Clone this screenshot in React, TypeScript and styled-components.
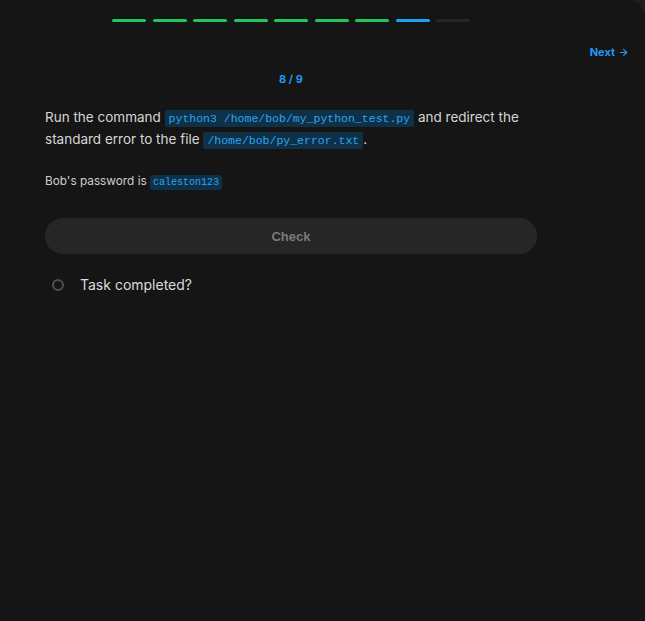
import React from 'react';
import styled, { createGlobalStyle } from 'styled-components';
import { ArrowRight } from 'lucide-react';

const Global = createGlobalStyle`
  html, body {
    margin: 0;
    padding: 0;
    background: #1e1e1e;
  }
  body {
    font-family: Inter, "Noto Sans", sans-serif;
  }
`;

const Panel = styled.div`
  width: 645px;
  height: 621px;
  background: #151515;
  border-top-right-radius: 18px;
  box-sizing: border-box;
  padding-top: 19px;
  overflow: hidden;
`;

const Progress = styled.div`
  display: flex;
  gap: 6.5px;
  padding-left: 112px;
`;

const Segment = styled.div<{ $state: 'done' | 'current' | 'todo' }>`
  width: 34px;
  height: 3px;
  border-radius: 2px;
  background: ${(p) =>
    p.$state === 'done' ? '#22c55e' : p.$state === 'current' ? '#1da1f2' : '#262626'};
`;

const TopRow = styled.div`
  display: flex;
  justify-content: flex-end;
  padding: 23px 16px 0 0;
`;

const NextLink = styled.a`
  display: flex;
  align-items: center;
  gap: 3px;
  font-size: 11px;
  font-weight: 700;
  color: #1d9bf0;
  cursor: pointer;
`;

const Content = styled.div`
  width: 492px;
  margin-left: 45px;
  display: flex;
  flex-direction: column;
`;

const Counter = styled.div`
  text-align: center;
  font-size: 11px;
  font-weight: 700;
  color: #1d9bf0;
  margin-top: 13px;
`;

const Question = styled.p`
  margin: 20px 0 0;
  font-size: 13.5px;
  line-height: 22px;
  color: #d6d6d6;
`;

const Code = styled.code<{ $small?: boolean }>`
  font-family: "Liberation Mono", "DejaVu Sans Mono", monospace;
  font-size: ${(p) => (p.$small ? '10px' : '11.5px')};
  line-height: 1;
  padding: ${(p) => (p.$small ? '2px 3px' : '2px 4px')};
  background: #0e3147;
  color: #2ea3f2;
  border-radius: 2px;
`;

const Note = styled.p`
  margin: 22px 0 0;
  font-size: 11.8px;
  line-height: 18px;
  color: #cfcfcf;
`;

const CheckButton = styled.button`
  margin-top: 28px;
  height: 36px;
  width: 100%;
  border: none;
  border-radius: 18px;
  background: #262626;
  color: #7b7b7b;
  font-family: "Liberation Sans", Arial, sans-serif;
  font-size: 13px;
  font-weight: 700;
`;

const TaskRow = styled.label`
  display: flex;
  align-items: center;
  gap: 16px;
  margin-top: 22px;
  padding-left: 7px;
  font-size: 14px;
  color: #dcdcdc;
`;

const Radio = styled.span`
  width: 8px;
  height: 8px;
  border-radius: 50%;
  border: 2px solid #4f4f4f;
  flex-shrink: 0;
`;

export default function App() {
  const steps: Array<'done' | 'current' | 'todo'> = [
    'done', 'done', 'done', 'done', 'done', 'done', 'done', 'current', 'todo',
  ];
  return (
    <>
      <Global />
      <Panel>
        <Progress>
          {steps.map((s, i) => (
            <Segment key={i} $state={s} />
          ))}
        </Progress>
        <TopRow>
          <NextLink>
            Next <ArrowRight size={11} strokeWidth={2.5} />
          </NextLink>
        </TopRow>
        <Content>
          <Counter>8 / 9</Counter>
          <Question>
            Run the command <Code>python3 /home/bob/my_python_test.py</Code> and redirect the
            standard error to the file <Code>/home/bob/py_error.txt</Code>.
          </Question>
          <Note>
            Bob's password is <Code $small>caleston123</Code>
          </Note>
          <CheckButton>Check</CheckButton>
          <TaskRow>
            <Radio />
            Task completed?
          </TaskRow>
        </Content>
      </Panel>
    </>
  );
}
